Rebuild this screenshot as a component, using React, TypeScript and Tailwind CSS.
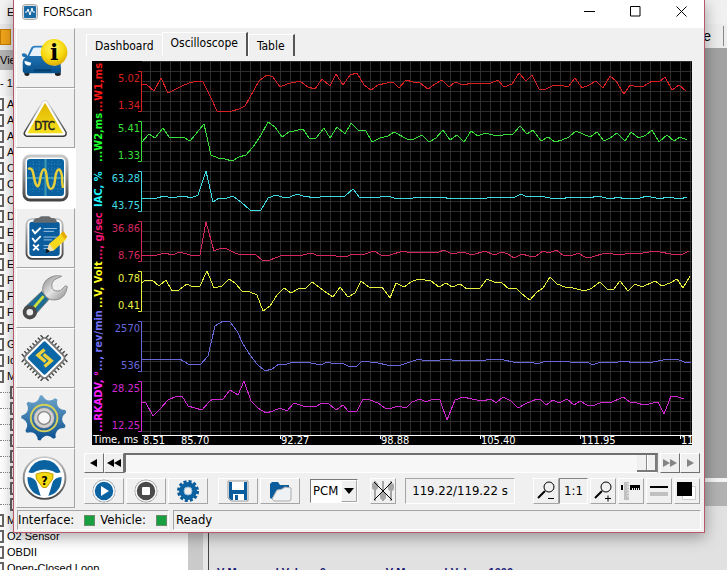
import React, { useState } from "react";
import clsx from "clsx";

type Channel = {
  label: string;
  max: string;
  min: string;
  color: string;
  line: string;
  top: number;
  bottom: number;
  labelY: number;
  points: string;
};

const channels: Channel[] = [
  {
    label: "...W1,ms",
    max: "5.02",
    min: "1.34",
    color: "#f81818",
    line: "#d82020",
    top: 71,
    bottom: 111,
    labelY: 112,
    points:
      "142,84 147,85 154,91 161,78 168,93 182,86 189,83 197,81 203,82 211,98 217,111 232,111 239,109 245,106 259,81 267,75 273,77 280,87 287,84 300,81 308,87 315,89 322,79 330,86 336,74 343,85 350,75 357,73 364,85 371,90 378,85 387,83 393,82 399,88 406,80 413,82 420,83 428,89 435,84 442,80 449,87 455,82 463,85 472,83 491,83 498,80 504,87 512,84 519,73 526,81 532,75 539,89 546,89 552,86 560,85 568,87 575,78 582,88 589,85 596,81 603,88 610,76 616,81 624,94 630,85 638,87 644,86 652,81 659,82 665,77 672,90 679,85 686,91",
  },
  {
    label: "...W2,ms",
    max: "5.41",
    min: "1.33",
    color: "#20ff30",
    line: "#3ae03a",
    top: 121,
    bottom: 161,
    labelY: 162,
    points:
      "142,142 149,134 155,138 163,128 169,137 183,137 190,141 204,124 211,155 218,158 225,159 232,161 239,157 246,155 253,147 261,135 268,122 275,127 282,137 289,132 303,129 309,138 316,138 324,128 330,138 337,127 345,134 351,123 358,130 366,131 372,142 380,138 388,136 394,132 407,139 414,139 422,135 429,142 436,138 443,130 450,140 457,135 464,142 471,131 478,136 485,133 493,135 503,135 513,134 520,126 527,134 533,130 541,141 548,137 555,142 562,140 569,137 576,131 583,134 590,137 597,132 604,141 610,138 617,133 625,141 631,132 639,138 646,135 652,130 659,142 667,135 674,141 680,137 687,140",
  },
  {
    label: "IAC, %",
    max: "63.28",
    min: "43.75",
    color: "#20f4ff",
    line: "#40dce4",
    top: 171,
    bottom: 211,
    labelY: 207,
    points:
      "142,198 157,198 164,196 168,197 177,197 184,196 191,198 198,195 206,171 213,202 219,198 227,198 233,196 241,202 250,210 255,211 261,210 268,198 276,195 282,197 290,197 297,194 303,196 316,198 324,196 331,197 339,196 345,196 353,189 360,198 363,197 380,197 388,196 394,198 413,198 422,197 428,198 443,197 450,199 487,198 490,197 515,197 521,194 527,197 533,196 545,197 550,198 563,199 568,197 590,198 597,196 611,199 618,197 625,199 640,198 647,196 660,199 667,197 680,199 687,197",
  },
  {
    label: "..., g/sec",
    max: "36.86",
    min: "8.76",
    color: "#f81878",
    line: "#d42860",
    top: 221,
    bottom: 261,
    labelY: 260,
    points:
      "142,255 157,255 165,253 172,255 180,252 190,255 200,255 206,222 214,251 221,248 227,249 233,252 240,255 255,254 263,261 270,260 283,255 298,256 312,253 318,256 327,255 345,257 353,254 362,255 374,251 381,255 390,255 403,251 407,252 439,252 444,250 452,254 463,252 472,255 485,251 494,255 502,252 508,254 514,258 522,254 529,256 536,256 543,251 549,253 556,250 563,255 571,256 578,253 585,257 592,257 605,253 620,255 630,253 638,254 654,251 677,255 683,254 689,251",
  },
  {
    label: "...V, Volt",
    max: "0.78",
    min: "0.41",
    color: "#ffff20",
    line: "#e8f040",
    top: 271,
    bottom: 311,
    labelY: 308,
    points:
      "142,283 144,281 152,280 159,286 166,280 172,291 179,290 187,284 193,287 200,286 207,271 214,288 222,286 229,279 235,283 242,291 250,292 257,295 263,311 270,306 277,295 284,288 291,293 298,289 306,288 312,282 319,287 327,293 333,297 340,287 348,297 355,293 361,281 369,287 382,287 390,298 396,283 404,287 411,282 418,279 431,281 439,287 446,283 452,287 460,284 467,289 471,288 480,288 487,279 494,282 502,283 509,289 516,288 522,294 530,300 537,292 543,288 550,277 557,284 565,287 573,288 585,291 592,288 600,282 607,289 613,290 620,281 628,291 635,284 642,287 655,281 662,286 670,283 677,279 683,288 690,276",
  },
  {
    label: "..., rev/min",
    max: "2570",
    min: "536",
    color: "#7070f8",
    line: "#6868dc",
    top: 321,
    bottom: 371,
    labelY: 371,
    points:
      "142,360 150,359 160,359 168,360 180,359 188,364 201,364 208,356 215,326 223,321 230,322 237,331 243,344 250,355 257,364 265,371 272,369 279,364 287,364 293,362 307,362 320,365 328,362 334,364 342,363 348,366 357,366 362,361 378,363 387,365 398,366 419,359 425,361 440,360 447,359 452,360 480,361 493,359 500,359 517,363 530,362 538,364 545,361 570,362 577,363 587,362 593,365 600,362 613,363 623,361 636,363 653,362 663,360 677,359 684,362 691,362",
  },
  {
    label: "...RKADV, °",
    max: "28.25",
    min: "12.25",
    color: "#ff20ff",
    line: "#d028d0",
    top: 381,
    bottom: 431,
    labelY: 432,
    points:
      "142,402 146,403 153,416 161,408 168,400 177,396 182,396 188,406 195,408 202,410 209,402 213,399 223,399 230,390 238,395 244,381 251,401 258,408 266,413 273,411 280,408 287,411 294,403 303,406 317,406 322,403 328,403 336,410 343,405 348,411 357,411 363,399 370,400 378,403 385,408 392,408 398,406 406,408 412,402 420,399 426,402 433,399 440,400 447,420 455,400 463,397 472,399 482,401 491,399 496,403 503,397 511,401 518,408 525,404 537,399 540,399 546,405 553,400 559,403 567,399 574,405 580,401 587,405 595,405 602,402 610,403 623,397 630,402 637,403 644,405 658,402 664,414 671,396 678,397 684,399",
  },
];

const ticks = [
  { x: 142, label: "8.51" },
  { x: 180, label: "85.70" },
  { x: 280, label: "92.27" },
  { x: 380, label: "98.88" },
  { x: 480, label: "105.40" },
  { x: 580, label: "111.95" },
  { x: 680, label: "11" },
];

const columns = Array.from({ length: 55 }, (_, i) => 150 + i * 10);
const rows = Array.from({ length: 38 }, (_, i) => 61 + i * 10);

const Oscilloscope = () => (
  <svg
    viewBox="92 61 600 384"
    className="block w-full bg-black font-['DejaVu_Sans_Condensed','DejaVu_Sans',sans-serif]"
    role="img"
    aria-label="Oscilloscope"
  >
    <g stroke="#2d2d2d" shapeRendering="crispEdges">
      {columns.map((x) => (
        <line key={x} x1={x + 0.5} x2={x + 0.5} y1="61" y2="435" />
      ))}
      {rows.map((y) => (
        <line key={y} x1="142" x2="692" y1={y + 0.5} y2={y + 0.5} />
      ))}
    </g>
    {channels.map((c) => (
      <g key={c.label}>
        <polyline
          points={c.points}
          fill="none"
          stroke={c.line}
          strokeWidth="1"
          shapeRendering="crispEdges"
        />
        <path
          d={`M138 ${c.top + 0.5}H141.5V${c.bottom + 0.5}H138`}
          fill="none"
          stroke={c.line}
        />
        <g fill={c.line} fontSize="11" textAnchor="end">
          <text x="140" y={c.top + 11}>
            {c.max}
          </text>
          <text x="140" y={c.bottom - 2}>
            {c.min}
          </text>
        </g>
        <text
          transform={`translate(102 ${c.labelY}) rotate(-90)`}
          fill={c.color}
          fontSize="11"
          fontWeight="bold"
        >
          {c.label}
        </text>
      </g>
    ))}
    <g fill="#fff" fontSize="11">
      <text x="93" y="443">
        Time, ms
      </text>
      {ticks.map((t) => (
        <text key={t.x} x={t.x + 1} y="444">
          {t.label}
        </text>
      ))}
    </g>
    <path
      d="M142 435.5H692M280.5 435V439M380.5 435V439M480.5 435V439M580.5 435V439M680.5 435V439"
      stroke="#fff"
    />
  </svg>
);

const CarIcon = () => (
  <svg viewBox="0 0 60 60" className="size-[60px]">
    <defs>
      <linearGradient id="car" x1="0" y1="0" x2="0" y2="1">
        <stop offset="0" stopColor="#2f83c4" />
        <stop offset="1" stopColor="#07508c" />
      </linearGradient>
      <radialGradient id="info" cx="0.45" cy="0.35" r="0.7">
        <stop offset="0" stopColor="#fff36a" />
        <stop offset="0.6" stopColor="#f7d90e" />
        <stop offset="1" stopColor="#d8a400" />
      </radialGradient>
    </defs>
    <path d="M7 40h6v8q-2.500 2-5 0zM40 40h6v8q-3 2-6 0z" fill="#222" />
    <path
      d="M5 26q2-2 5 0l1 2 4-9q1-2 4-2h18l6 12q3 2 3 6v9q0 2-3 2H9q-3 0-3-3v-9q0-3 3-5-4 0-4-3z"
      fill="url(#car)"
    />
    <path d="M17 20q0-1 3-1h15l5 9H13z" fill="#e8f2fa" />
    <path d="M8 33l7 2-1 3q-5 0-6-3zM45 33l-8 2 1 3q5 0 7-3z" fill="#fff" />
    <path d="M18 43h18" stroke="#063c6c" strokeWidth="2" />
    <circle cx="39" cy="24" r="14" fill="url(#info)" />
    <text
      x="39"
      y="32"
      textAnchor="middle"
      fontSize="23"
      fontWeight="bold"
      fontFamily="DejaVu Serif, serif"
    >
      i
    </text>
  </svg>
);

const DtcIcon = () => (
  <svg viewBox="0 0 60 60" className="size-[60px]">
    <defs>
      <linearGradient id="dtcRim" x1="0" y1="0" x2="0" y2="1">
        <stop offset="0" stopColor="#ddd" />
        <stop offset="1" stopColor="#3c3c3c" />
      </linearGradient>
      <linearGradient id="dtc" x1="0" y1="0" x2="0" y2="1">
        <stop offset="0" stopColor="#e0b400" />
        <stop offset="1" stopColor="#f6e01e" />
      </linearGradient>
    </defs>
    <path
      d="M29.500 15L11 46H48.500Z"
      fill="#fff"
      stroke="url(#dtcRim)"
      strokeWidth="8"
      strokeLinejoin="round"
    />
    <path
      d="M29.500 15L11 46H48.500Z"
      fill="url(#dtc)"
      stroke="#fff"
      strokeWidth="5"
      strokeLinejoin="round"
    />
    <path d="M29.500 14L11 46H48.500Z" fill="url(#dtc)" />
    <text
      x="29"
      y="43"
      textAnchor="middle"
      fontSize="12"
      fontFamily="DejaVu Sans Condensed, sans-serif"
      fill="#222"
      stroke="#222"
      strokeWidth="0.500"
    >
      DTC
    </text>
  </svg>
);

const ScopeIcon = () => (
  <svg viewBox="0 0 60 60" className="size-[60px]">
    <defs>
      <linearGradient id="rim" x1="0" y1="0" x2="0" y2="1">
        <stop offset="0" stopColor="#c8c8c8" />
        <stop offset="1" stopColor="#444" />
      </linearGradient>
    </defs>
    <rect x="9" y="8" width="43" height="44" rx="6" fill="#fff" stroke="url(#rim)" strokeWidth="3" />
    <rect x="12" y="11" width="37" height="37" rx="3" fill="#0a62a0" />
    <path
      d="M15 16h31M15 21h31M15 26h31M15 36h31M15 41h31M18 13v33M24 13v33M37 13v33M43 13v33"
      stroke="#2b82b8"
      strokeDasharray="1 2"
    />
    <path d="M12 30h37M30.500 11v37" stroke="#3f99b5" strokeWidth="2" />
    <path
      d="M13 21C17 19 18 23 19 29S23 45 25 32S31 17 32 31S39 43 40 32S45 17 47 28Q47 35 48 40"
      fill="none"
      stroke="#e7cf3c"
      strokeWidth="2.500"
    />
  </svg>
);

const TestsIcon = () => (
  <svg viewBox="0 0 60 60" className="size-[60px]">
    <rect x="10" y="10" width="38" height="42" rx="6" fill="#fff" stroke="url(#rim)" strokeWidth="2" />
    <rect x="13" y="13" width="32" height="36" rx="3" fill="#0b5c9c" />
    <path d="M17 14q0-5 5-5h1q1-2 3-2h7q2 0 3 2h1q5 0 5 5z" fill="#666b70" />
    <path
      d="M16 21l3 4 6-6M16 30l3 4 6-6M17 37l6 6M23 37l-6 6"
      fill="none"
      stroke="#fff"
      strokeWidth="2"
    />
    <path d="M28 20h14M28 23h11M28 29h14M28 32h9M28 38h8M28 41h5" stroke="#9cc8ea" />
    <path d="M31 45l3-9 13-11 5 6-13 12z" fill="#f6d91d" />
    <path d="M46 25l3-2 4 6-3 2z" fill="#e5ab00" />
    <path d="M31 45l3-9 5 7z" fill="#f3e2b8" />
    <path d="M30 46l1-5 4 3z" fill="#151515" />
  </svg>
);

const WrenchIcon = () => (
  <svg viewBox="0 0 60 60" className="size-[60px]">
    <defs>
      <linearGradient id="steel" x1="0" y1="0" x2="1" y2="1">
        <stop offset="0" stopColor="#888" />
        <stop offset="0.5" stopColor="#e4e4e4" />
        <stop offset="1" stopColor="#888" />
      </linearGradient>
    </defs>
    <path d="M26 23l8 8-16 18-10-9z" fill="#1d6c96" stroke="#777" />
    <path d="M28 28L17 41" stroke="#cfdf3a" strokeWidth="3" />
    <path
      d="M47 7q-9-2-16 4-6 7-3 14 4 8 13 7 10-1 12-14l-2-1-5 5q-6 2-9-2-2-5 2-9z"
      fill="url(#steel)"
      stroke="#8a8a8a"
    />
    <circle cx="13.500" cy="45" r="5.500" fill="#eee" stroke="#4a4a4a" strokeWidth="4" />
  </svg>
);

const pins = [-14, -10, -6, -2, 2, 6, 10, 14];

const ChipIcon = () => (
  <svg viewBox="0 0 60 60" className="size-[60px]">
    <g transform="translate(29 30) rotate(45)">
      {pins.map((p) => (
        <path key={p} d={`M${p} -20V20M-20 ${p}H20`} stroke="#444" strokeWidth="1.500" />
      ))}
      <rect x="-16" y="-16" width="32" height="32" rx="4" fill="#fff" stroke="#777" strokeWidth="2" />
      <rect x="-13" y="-13" width="26" height="26" rx="2" fill="#0b67a6" />
    </g>
    <path
      d="M29 21l-7 6 8 7M29 39l7-6-8-7"
      fill="none"
      stroke="#eed13a"
      strokeWidth="3.500"
    />
  </svg>
);

const teeth = 9;

const gearPath = () => {
  const at = (r: number, turn: number) => {
    const a = (turn * 2 * Math.PI) / teeth - 1.7;
    return `${(28.5 + r * Math.cos(a)).toFixed(1)} ${(30 + r * Math.sin(a)).toFixed(1)}`;
  };
  let d = `M${at(24, 0.08)}`;
  for (let i = 0; i < teeth; i++) {
    d += `Q${at(15, i + 0.5)} ${at(24, i + 0.92)}L${at(24, i + 1.08)}`;
  }
  return d + "Z";
};

const ConfigIcon = () => (
  <svg viewBox="0 0 60 60" className="size-[60px]">
    <defs>
      <linearGradient id="cog" x1="0" y1="0" x2="0" y2="1">
        <stop offset="0" stopColor="#6ea4ca" />
        <stop offset="1" stopColor="#0a4f8e" />
      </linearGradient>
    </defs>
    <path d={gearPath()} fill="url(#cog)" />
    <circle cx="28.500" cy="30" r="14" fill="none" stroke="#d6cf58" strokeWidth="2" />
    <circle cx="28.500" cy="30" r="8.500" fill="#f7f7f7" stroke="#888" strokeWidth="5" />
    <circle cx="28.500" cy="30" r="9" fill="none" stroke="#d0d0d0" strokeWidth="3" />
  </svg>
);

const WheelIcon = () => (
  <svg viewBox="0 0 60 60" className="size-[60px]">
    <circle cx="29" cy="30" r="22" fill="#fff" stroke="url(#rim)" strokeWidth="2" />
    <path d="M12 24Q17 11 29 11t17 13q-5 2-8-1-9-4-18 0-3 3-8 1z" fill="#0b62a1" />
    <path d="M11 29q8 0 10 7t4 13Q11 45 11 29zM47 29q-8 0-10 7t-4 13q14-4 14-20z" fill="#0b62a1" />
    <path
      d="M20 26q9-4 18 0 1 5-4 10l-3 4h-4l-3-4q-5-5-4-10z"
      fill="#f4d812"
      stroke="#bb9a00"
    />
    <text
      x="29"
      y="37"
      textAnchor="middle"
      fontSize="13"
      fontWeight="bold"
      fontFamily="DejaVu Sans Condensed, sans-serif"
    >
      ?
    </text>
  </svg>
);

const sections = [
  { name: "Vehicle info", Icon: CarIcon },
  { name: "Trouble codes", Icon: DtcIcon },
  { name: "Live data", Icon: ScopeIcon },
  { name: "Tests", Icon: TestsIcon },
  { name: "Service functions", Icon: WrenchIcon },
  { name: "Module programming", Icon: ChipIcon },
  { name: "Settings", Icon: ConfigIcon },
  { name: "Help", Icon: WheelIcon },
];

const bevel =
  "flex items-center justify-center border border-t-white border-l-white border-r-[#a5a5a5] border-b-[#a5a5a5] bg-[#f0f0f0]";

const ToolButton = ({
  label,
  small,
  children,
}: {
  label: string;
  small?: boolean;
  children: React.ReactNode;
}) => (
  <button
    aria-label={label}
    className={clsx(bevel, "h-[26px] shrink-0", small ? "w-[26px]" : "w-10")}
  >
    {children}
  </button>
);

const ScrollButton = ({ label, d, muted }: { label: string; d: string; muted?: boolean }) => (
  <button
    aria-label={label}
    className="flex h-5 w-5 shrink-0 items-center justify-center border border-t-white border-l-white border-r-[#6f6f6f] border-b-[#6f6f6f] bg-[#f0f0f0]"
  >
    <svg viewBox="0 0 16 10" className="h-[10px] w-4">
      <path d={d} fill={muted ? "#858585" : "#000"} />
    </svg>
  </button>
);

const TitleBar = () => (
  <header className="flex h-7 items-start bg-white pl-2">
    <svg viewBox="0 0 16 16" className="mt-1 size-4">
      <rect x="0.500" y="0.500" width="15" height="15" rx="3" fill="#ddd" stroke="#aaa" />
      <rect x="2" y="2" width="12" height="12" rx="1" fill="#1a6ba4" />
      <path d="M3 8h2l1-3 2 6 2-7 1 4h2" fill="none" stroke="#fff" />
    </svg>
    <h1 className="ml-[5px] flex-1 font-['Open_Sans',sans-serif] text-xs leading-6">FORScan</h1>
    <button aria-label="Minimize" className="flex h-[22px] w-[46px] items-center justify-center">
      <svg viewBox="0 0 11 11" className="size-[11px]">
        <path d="M0 5.500h11" stroke="#000" />
      </svg>
    </button>
    <button aria-label="Maximize" className="flex h-[22px] w-[46px] items-center justify-center">
      <svg viewBox="0 0 11 11" className="size-[11px]">
        <path d="M0.500 0.500h9.500v9.500h-9.500z" fill="none" stroke="#000" />
      </svg>
    </button>
    <button aria-label="Close" className="flex h-[22px] w-[46px] items-center justify-center">
      <svg viewBox="0 0 11 11" className="size-[11px]">
        <path d="M0.500 0.500l10 10M10.500 0.500l-10 10" stroke="#000" />
      </svg>
    </button>
  </header>
);

const Tabs = () => {
  const [tab, setTab] = useState("Oscilloscope");
  return (
    <div role="tablist" className="flex h-6 items-end pl-[10px]">
      {["Dashboard", "Oscilloscope", "Table"].map((name) => (
        <button
          key={name}
          role="tab"
          aria-selected={tab === name}
          onClick={() => setTab(name)}
          className={clsx(
            "border-t border-l border-white px-2 leading-5",
            tab === name
              ? "h-6 border-r-2 border-r-[#555] pb-1"
              : "h-[22px] last:border-r-2 last:border-r-[#555]",
          )}
        >
          {name}
        </button>
      ))}
    </div>
  );
};

const TimeScroll = () => (
  <div className="flex">
    <ScrollButton label="Step back" d="M11 1v8L4 5z" />
    <ScrollButton label="Page back" d="M8 1v8L1 5zM15 1v8L8 5z" />
    <input
      type="range"
      aria-label="Time position"
      defaultValue={100}
      className="mr-[2px] h-5 min-w-0 flex-1 appearance-none border-t-2 border-l-2 border-r border-b border-t-[#6f6f6f] border-l-[#6f6f6f] border-r-[#8a8a8a] border-b-white bg-[#f7f7f7] [&::-webkit-slider-thumb]:h-[17px] [&::-webkit-slider-thumb]:w-5 [&::-webkit-slider-thumb]:appearance-none [&::-webkit-slider-thumb]:border-r-2 [&::-webkit-slider-thumb]:border-b-2 [&::-webkit-slider-thumb]:border-[#7a7a7a] [&::-webkit-slider-thumb]:bg-[linear-gradient(90deg,#f0f0f0_9px,#8a8a8a_9px,#8a8a8a_10px,#fff_10px,#fff_11px,#f0f0f0_11px)]"
    />
    <ScrollButton label="Page forward" d="M1 1v8l7-4zM8 1v8l7-4z" muted />
    <ScrollButton label="Step forward" d="M5 1v8l7-4z" muted />
  </div>
);

const Toolbar = () => (
  <div className="flex items-center text-[13px]">
    <div className="flex gap-[2px]">
      <ToolButton label="Start">
        <svg viewBox="0 0 24 24" className="size-6">
          <circle cx="12" cy="12" r="11" fill="#0b62a1" stroke="#999" />
          <circle cx="12" cy="12" r="10" fill="none" stroke="#fff" strokeWidth="1.500" />
          <path d="M9 7l8 5-8 5z" fill="#fff" />
        </svg>
      </ToolButton>
      <ToolButton label="Stop">
        <svg viewBox="0 0 24 24" className="size-6">
          <circle cx="12" cy="12" r="11" fill="#4a4a4a" stroke="#999" />
          <circle cx="12" cy="12" r="10" fill="none" stroke="#fff" strokeWidth="1.500" />
          <rect x="8" y="8" width="8" height="8" rx="1" fill="#fff" />
        </svg>
      </ToolButton>
      <ToolButton label="Configure">
        <svg viewBox="0 0 24 24" className="size-6">
          <circle cx="12" cy="12" r="9.500" fill="none" stroke="#0b5c9c" strokeWidth="3" strokeDasharray="3 2" />
          <circle cx="12" cy="12" r="6.500" fill="#fff" stroke="#0b62a1" strokeWidth="5" />
          <circle cx="12" cy="12" r="4" fill="#eee" stroke="#8fb8d8" />
        </svg>
      </ToolButton>
    </div>
    <div className="ml-[10px] flex gap-[2px]">
      <ToolButton label="Save">
        <svg viewBox="0 0 24 24" className="size-6">
          <path d="M2 2h20v20H5l-3-3z" fill="#fff" stroke="#999" />
          <path d="M3 3h18v18H5l-2-2z" fill="#0b5c9c" />
          <path d="M6 3h12v8H6zM7 15h11v6H7z" fill="#fff" />
          <path d="M9 16h3v5H9z" fill="#0b5c9c" />
        </svg>
      </ToolButton>
      <ToolButton label="Open">
        <svg viewBox="0 0 24 24" className="size-6">
          <path d="M2 19V5l2-2h6l2 3h9v5H9L4 20z" fill="#0b5c9c" />
          <path d="M4 20l5-9q5 0 8-3l6 1v11q0 2-2 2H6z" fill="#eef2f4" stroke="#aaa" />
        </svg>
      </ToolButton>
    </div>
    <div className="relative ml-[10px] border border-t-[#7a7a7a] border-l-[#7a7a7a] border-r-white border-b-white bg-white">
      <select
        aria-label="Module"
        className="block h-[22px] w-[46px] appearance-none bg-white pl-[2px] text-[13px] outline-none"
      >
        <option>PCM</option>
      </select>
      <span className={clsx(bevel, "pointer-events-none absolute top-0 right-0 h-[22px] w-4")}>
        <svg viewBox="0 0 10 6" className="h-[6px] w-[10px]">
          <path d="M0 0h10L5 6z" />
        </svg>
      </span>
    </div>
    <div className="ml-3 flex">
      <ToolButton label="Filter" small>
        <svg viewBox="0 0 24 24" className="size-6">
          <path d="M4 2v20M12 2v20M20 2v20" stroke="#a5a5a5" strokeWidth="2" />
          <path d="M4 6v2M12 16v2M20 7v2" stroke="#a5a5a5" strokeWidth="6" strokeLinecap="round" />
          <path d="M3 3l18 18M21 3L3 21" stroke="#000" />
        </svg>
      </ToolButton>
    </div>
    <output className="ml-[9px] h-[26px] w-[110px] border border-t-[#a5a5a5] border-l-[#a5a5a5] border-r-white border-b-white text-center leading-6 whitespace-nowrap">
      119.22/119.22 s
    </output>
    <div className="ml-auto flex gap-[2px]">
      <div className="flex">
        <ToolButton label="Zoom out" small>
          <svg viewBox="0 0 24 24" className="size-6" fill="none" stroke="#000">
            <circle cx="15" cy="8" r="5" />
            <path d="M11 12l-7 7" strokeWidth="2" />
            <path d="M14 19.500h6" />
          </svg>
        </ToolButton>
        <button className="h-[26px] w-[29px] border border-t-[#858585] border-l-[#858585] border-r-white border-b-white leading-6">
          1:1
        </button>
      </div>
      <ToolButton label="Zoom in" small>
        <svg viewBox="0 0 24 24" className="size-6" fill="none" stroke="#000">
          <circle cx="15" cy="8" r="5" />
          <path d="M11 12l-7 7" strokeWidth="2" />
          <path d="M14 19.500h6M17 16.500v6" />
        </svg>
      </ToolButton>
      <ToolButton label="Ruler" small>
        <svg viewBox="0 0 24 24" className="size-6">
          <path d="M5 3h5v18H5z" fill="#c0c0c0" />
          <path d="M8 5h2M8 8h2M8 11h2M8 14h2M8 17h2" stroke="#f0f0f0" />
          <path d="M2 6h2v5H2zM11 6h10v5h-1V9h-1v2h-1V9h-1v2h-1V9h-1v2h-1V9h-1v2h-2z" />
        </svg>
      </ToolButton>
      <ToolButton label="Line width" small>
        <svg viewBox="0 0 24 24" className="size-6">
          <path d="M3 7h18v2H3z" />
          <path d="M3 13h18v4H3z" fill="#c0c0c0" />
        </svg>
      </ToolButton>
      <ToolButton label="Colors" small>
        <svg viewBox="0 0 24 24" className="size-6">
          <path d="M7.500 7.500h13v13h-13z" fill="#fff" stroke="#ccc" />
          <path d="M2 3h15v14H2z" />
        </svg>
      </ToolButton>
    </div>
  </div>
);

const StatusBar = () => (
  <footer className="flex gap-1 px-[3px] pt-[2px] pb-[2px] text-[13px] leading-[18px]">
    <div className="flex w-[152px] items-center border border-t-[#a5a5a5] border-l-[#a5a5a5] border-r-white border-b-white">
      <span>Interface:</span>
      <span className="mr-[5px] ml-[10px] size-[11px] border border-[#6a8a6a] bg-[#18a040]" />
      <span>Vehicle:</span>
      <span className="ml-[10px] size-[11px] border border-[#6a8a6a] bg-[#18a040]" />
    </div>
    <div className="flex-1 border border-t-[#a5a5a5] border-l-[#a5a5a5] border-r-white border-b-white pl-[2px]">
      Ready
    </div>
  </footer>
);

const tree = ["A", "A", "A", "A", "O", "O", "O", "D", "E", "E", "E", "F", "F", "F", "F", "G", "Id", "M"];
const branch = Array.from({ length: 8 }, (_, i) => i);
const leaves = ["M", "O2 Sensor", "OBDII", "Open-Closed Loop"];

const TreeItem = ({ name }: { name: string }) => (
  <li className="flex h-4 items-center gap-[3px] whitespace-nowrap">
    <span className="h-[13px] w-1 shrink-0 border-2 border-l-0 border-[#666] bg-white" />
    {name}
  </li>
);

// Application that stays open behind the FORScan window
const BackgroundApp = () => (
  <div className="absolute inset-0 flex overflow-hidden bg-[#e1e1e1] font-['Liberation_Sans',sans-serif] text-[11px]">
    <div className="w-[188px] shrink-0 bg-white">
      <div className="h-6 bg-[#f4f4f4] pl-[7px] leading-6">E</div>
      <div className="flex h-[26px] items-center bg-[#e9e9e9]">
        <span className="h-4 w-[11px] border border-[#c47c00] bg-[#f2a51a]" />
      </div>
      <div className="h-5 bg-[#b5b5b5] leading-5">Vie</div>
      <div className="h-[26px] bg-[#f8f8f8] leading-[26px]">- 1</div>
      <ul>
        {tree.map((name, i) => (
          <TreeItem key={i} name={name} />
        ))}
        {branch.map((i) => (
          <li key={`b${i}`} className="flex h-4 items-center">
            <span className="w-[10px] border-t border-dotted border-[#888]" />
            <span className="size-[13px] border-2 border-[#666]" />
          </li>
        ))}
        {leaves.map((name) => (
          <TreeItem key={name} name={name} />
        ))}
      </ul>
    </div>
    <div className="w-[15px] shrink-0 bg-[#cacaca]" />
    <div className="w-[6px] shrink-0 border-r border-[#444] bg-[#e6e6e6]" />
    <div className="flex-1">
      <div className="h-6 bg-[#f0f0f0]" />
      <div className="flex h-6 items-center justify-end gap-3 bg-[#ececec] pr-[3px] text-sm">
        <span>e</span>
        <span className="h-5 border-l border-[#888]" />
      </div>
      <div className="h-[430px] bg-[#a2a2a2]" />
      <div className="h-1 bg-[#f4f4f4]" />
      <div className="h-6 bg-[#b2b2b2]" />
      <div className="mt-[59px] flex gap-[60px] pl-2 font-bold whitespace-nowrap text-[#161678]">
        <span>V Measured Values 0</span>
        <span>V Measured Values 1000</span>
      </div>
    </div>
  </div>
);

export default function App() {
  return (
    <div className="relative min-h-screen overflow-hidden font-['DejaVu_Sans_Condensed','DejaVu_Sans',sans-serif] text-xs text-black">
      <BackgroundApp />
      <div className="relative mr-[22px] ml-[13px] border border-t-0 border-[#b8566a] bg-[#f0f0f0] shadow-[0_4px_14px_rgba(0,0,0,0.35)]">
        <TitleBar />
        <div className="flex">
          <nav className="flex w-[62px] shrink-0 flex-col">
            {sections.map(({ name, Icon }) => (
              <button
                key={name}
                aria-label={name}
                className={clsx(
                  "flex h-[60px] items-center justify-center overflow-hidden",
                  name === "Live data"
                    ? "bg-white"
                    : "mr-[1px] ml-[2px] border border-t-white border-l-white border-r-[#a5a5a5] border-b-[#a5a5a5]",
                )}
              >
                <Icon />
              </button>
            ))}
          </nav>
          <main className="flex min-w-0 flex-1 flex-col pt-1">
            <Tabs />
            <div className="pt-[5px] pr-3 pl-4">
              <Oscilloscope />
            </div>
            <div className="flex flex-col gap-[5px] pt-2 pr-1 pl-2">
              <TimeScroll />
              <Toolbar />
            </div>
          </main>
        </div>
        <StatusBar />
      </div>
    </div>
  );
}
